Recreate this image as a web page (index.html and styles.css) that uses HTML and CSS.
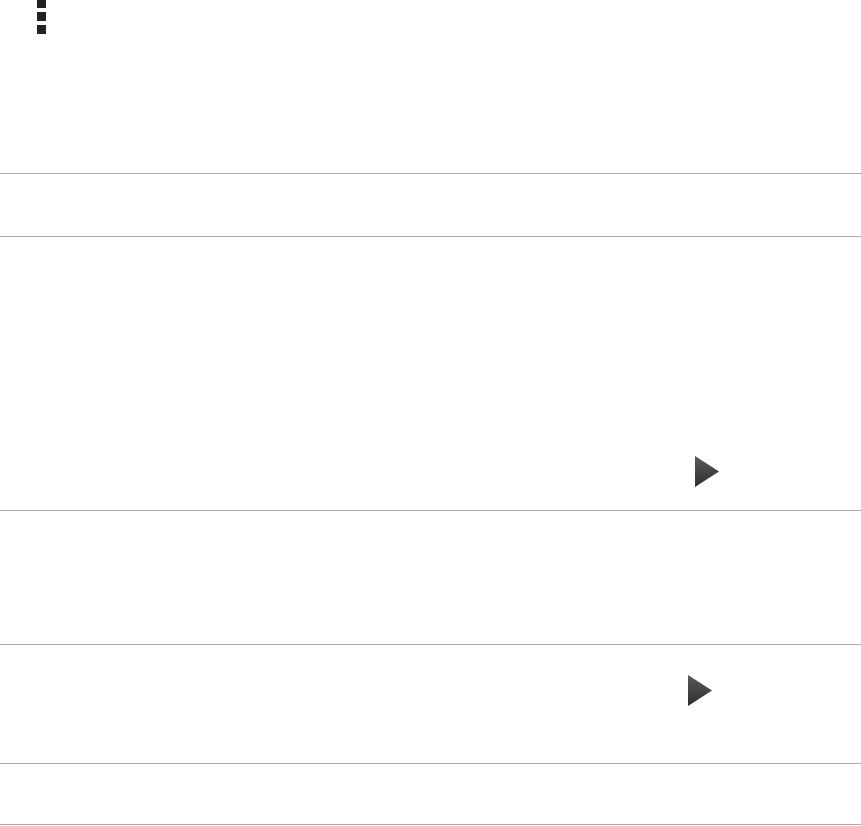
FILE: index.html
```html
<!DOCTYPE html>
<html>
<head>
<meta charset="utf-8">
<link rel="stylesheet" href="styles.css">
</head>
<body>
<div class="header">
  <div class="kebab"><span></span><span></span><span></span></div>
</div>
<div class="row r1"></div>
<div class="row r2">
  <svg class="play p1" width="24" height="31" viewBox="0 0 24 31">
    <defs><linearGradient id="g1" x1="0" y1="0" x2="0" y2="1"><stop offset="0" stop-color="#5a5a5a"/><stop offset="1" stop-color="#2e2e2e"/></linearGradient></defs>
    <polygon points="0,0 24,15.5 0,31" fill="url(#g1)"/>
  </svg>
</div>
<div class="row r3"></div>
<div class="row r4">
  <svg class="play p2" width="24" height="31" viewBox="0 0 24 31">
    <defs><linearGradient id="g2" x1="0" y1="0" x2="0" y2="1"><stop offset="0" stop-color="#5a5a5a"/><stop offset="1" stop-color="#2e2e2e"/></linearGradient></defs>
    <polygon points="0,0 24,15.5 0,31" fill="url(#g2)"/>
  </svg>
</div>
<div class="row r5"></div>
</body>
</html>
```
FILE: styles.css
```css
html, body { margin: 0; padding: 0; background: #fff; font-family: "Liberation Sans", sans-serif; }
.header { height: 174px; padding-left: 37px; box-sizing: border-box; }
.kebab { display: flex; flex-direction: column; gap: 4px; width: 9px; margin-top: -1px; }
.kebab span { display: block; width: 9px; height: 9px; background: #222; }
.row { border-top: 1px solid #aaa; box-sizing: content-box; }
.r1 { height: 62px; }
.r2 { height: 273px; }
.r3 { height: 133px; }
.r4 { height: 118px; }
.r5 { height: 60px; border-bottom: 1px solid #aaa; }
.play { display: block; }
.p1 { margin-left: 695px; padding-top: 219px; }
.p2 { margin-left: 688px; padding-top: 30px; }
```
